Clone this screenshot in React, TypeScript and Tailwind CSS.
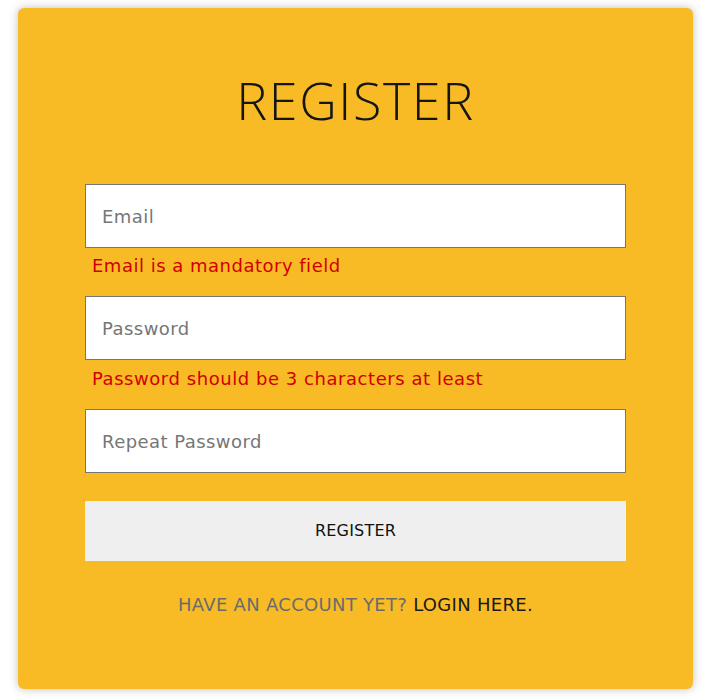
export default function App() {
    return (
        <div className="min-h-[699px] bg-white pl-[18px] pt-2 font-['DejaVu_Sans',sans-serif]">
            <div className="flex h-[681px] w-[675px] flex-col items-center rounded-md bg-[#f8bb26] shadow-[0_0_10px_rgba(0,0,0,0.25)]">
                <h1 className="mt-[62px] font-['Open_Sans',sans-serif] text-[52px] font-light leading-[60px] tracking-[1.6px] text-[#151515]">REGISTER</h1>

                <form className="mt-[54px] flex w-[541px] flex-col">
                    <input
                        type="email"
                        placeholder="Email"
                        className="h-16 w-full border border-[#767676] bg-white px-4 text-[18px] tracking-[0.45px] text-[#333] placeholder:text-[#767676] outline-none"
                    />
                    <p className="mt-[6px] pl-[7px] text-[18px] leading-6 tracking-[0.5px] text-[#d10000]">Email is a mandatory field</p>

                    <input
                        type="password"
                        placeholder="Password"
                        className="mt-[18px] h-16 w-full border border-[#767676] bg-white px-4 text-[18px] tracking-[0.45px] text-[#333] placeholder:text-[#767676] outline-none"
                    />
                    <p className="mt-[7px] pl-[7px] text-[18px] leading-6 tracking-[0.55px] text-[#d10000]">Password should be 3 characters at least</p>

                    <input
                        type="password"
                        placeholder="Repeat Password"
                        className="mt-[18px] h-16 w-full border border-[#767676] bg-white px-4 text-[18px] tracking-[0.45px] text-[#333] placeholder:text-[#767676] outline-none"
                    />

                    <button type="button" className="mt-7 h-[60px] w-full bg-[#efefef] text-[16px] tracking-[0.2px] text-[#111]">
                        REGISTER
                    </button>
                </form>

                <p className="mt-[32px] text-[18px] leading-6 tracking-[0.3px] text-[#6b6b6b]">
                    HAVE AN ACCOUNT YET? <a href="#" className="text-[#1a1a1a]">LOGIN HERE.</a>
                </p>
            </div>
        </div>
    );
}
